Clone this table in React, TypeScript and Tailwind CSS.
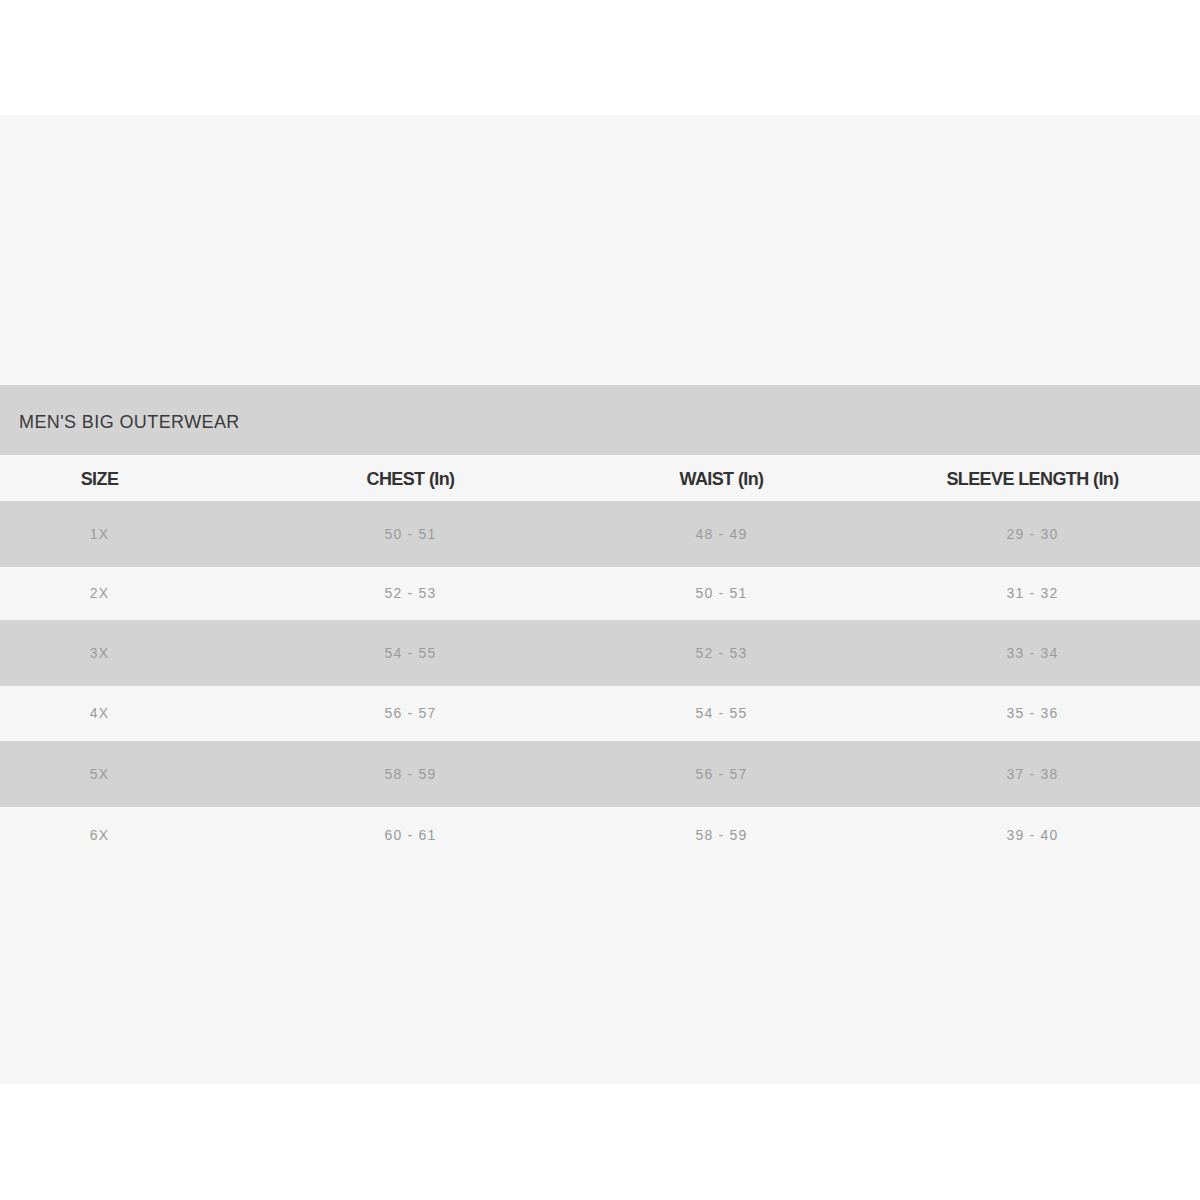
import React from "react";

const rows = [
  ["1X", "50 - 51", "48 - 49", "29 - 30"],
  ["2X", "52 - 53", "50 - 51", "31 - 32"],
  ["3X", "54 - 55", "52 - 53", "33 - 34"],
  ["4X", "56 - 57", "54 - 55", "35 - 36"],
  ["5X", "58 - 59", "56 - 57", "37 - 38"],
  ["6X", "60 - 61", "58 - 59", "39 - 40"],
];

const rowClasses = [
  "h-[66px] bg-[#d3d3d3]",
  "h-[53px] bg-[#f6f6f6]",
  "h-[66px] bg-[#d3d3d3]",
  "h-[55px] bg-[#f6f6f6]",
  "h-[66px] bg-[#d3d3d3]",
  "h-[56px] bg-[#f6f6f6]",
];

const headers = ["SIZE", "CHEST (In)", "WAIST (In)", "SLEEVE LENGTH (In)"];

export default function App() {
  return (
    <div
      className="w-[1200px] h-[1200px] bg-white flex flex-col overflow-hidden"
      style={{ fontFamily: '"Liberation Sans", Arial, sans-serif' }}
    >
      <div className="h-[115px] shrink-0 bg-white" />
      <div className="h-[969px] shrink-0 bg-[#f6f6f6] flex flex-col">
        <div className="h-[270px] shrink-0" />
        <div className="h-[70px] bg-[#d3d3d3] flex items-center pl-[19px] pt-[4px] text-[18px] text-[#3a3a3a] tracking-[0.4px]">
          MEN'S BIG OUTERWEAR
        </div>
        <div className="h-[46px] bg-[#f6f6f6] overflow-hidden">
          <div className="-ml-[56px] w-[1244px] h-full grid grid-cols-4 items-center pt-[2px]">
            {headers.map((h) => (
              <div
                key={h}
                className="text-center text-[18px] font-bold text-[#333] tracking-[-0.6px]"
              >
                {h}
              </div>
            ))}
          </div>
        </div>
        {rows.map((r, i) => (
          <div key={r[0]} className={rowClasses[i] + " overflow-hidden"}>
            <div className="-ml-[56px] w-[1244px] h-full grid grid-cols-4 items-center">
              {r.map((c, j) => (
                <div
                  key={j}
                  className="text-center text-[14px] text-[#9a9a9a] tracking-[1.2px]"
                >
                  {c}
                </div>
              ))}
            </div>
          </div>
        ))}
      </div>
      <div className="flex-1 bg-white" />
    </div>
  );
}
